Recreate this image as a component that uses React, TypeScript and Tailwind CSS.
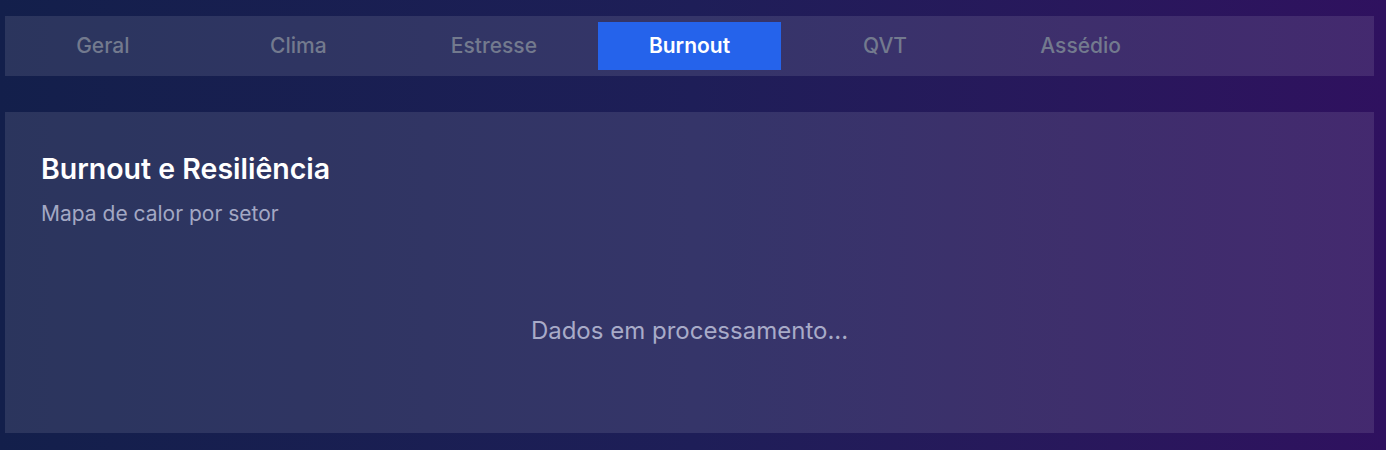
const tabs = ['Geral', 'Clima', 'Estresse', 'Burnout', 'QVT', 'Assédio']

export default function App() {
  const active = 'Burnout'
  return (
    <div
      className="min-h-[450px] bg-gradient-to-r from-[#131f4b] via-[#1e1e58] to-[#2f115f] pl-[5px] pr-[12px] pt-[16px] pb-[17px]"
      style={{ fontFamily: 'Inter, "Noto Sans", sans-serif' }}
    >
      <div className="grid h-[60px] grid-cols-7 gap-[12px] bg-white/10 p-[6px]">
        {tabs.map((t) => (
          <button
            key={t}
            className={
              t === active
                ? 'bg-[#2563eb] text-[21px] font-semibold text-white'
                : 'text-[21px] font-medium text-[#737a8e]'
            }
          >
            {t}
          </button>
        ))}
      </div>

      <div className="mt-[36px] bg-white/10 px-[36px] pt-[39px] pb-[87px]">
        <h2 className="text-[28.5px] leading-[36px] font-semibold text-white">
          Burnout e Resiliência
        </h2>
        <p className="mt-[13px] text-[21px] leading-[28px] text-[#a3a8c4]">Mapa de calor por setor</p>
        <div className="mt-[88px] text-center text-[24px] leading-[30px] text-[#a8abc8]">
          Dados em processamento...
        </div>
      </div>
    </div>
  )
}
